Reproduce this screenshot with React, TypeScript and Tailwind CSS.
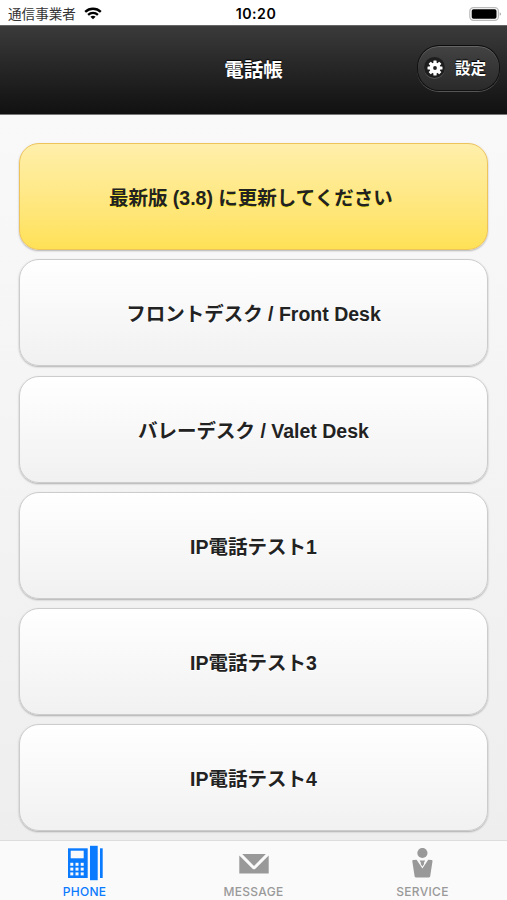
import * as React from 'react';
import { clsx } from 'clsx';

const contacts = [
  { label: '最新版 (3.8) に更新してください\u00a0', highlight: true },
  { label: 'フロントデスク / Front Desk' },
  { label: 'バレーデスク / Valet Desk' },
  { label: 'IP電話テスト1' },
  { label: 'IP電話テスト3' },
  { label: 'IP電話テスト4' },
];

function WifiIcon() {
  return (
    <svg width="18" height="13" viewBox="0 0 18 13" fill="none" stroke="#000" strokeWidth="2.3">
      <path d="M1.2 4.9C5.6 0.7 12.4 0.7 16.8 4.9" />
      <path d="M4.1 7.9C6.9 5.3 11.1 5.3 13.9 7.9" />
      <path d="M9 12.2L6.4 9.8Q9 7.6 11.6 9.8Z" fill="#000" stroke="none" />
    </svg>
  );
}

function BatteryIcon() {
  return (
    <svg width="33" height="14" viewBox="0 0 33 14">
      <rect x="0.8" y="0.7" width="28.6" height="12.6" rx="3.6" fill="#fff" stroke="#bbb" strokeWidth="1.2" />
      <rect x="2.7" y="2.3" width="24.8" height="9.4" rx="1.8" fill="#000" />
      <path d="M30.7 5.2Q32 5.7 32 7T30.7 8.8Z" fill="#aaa" />
    </svg>
  );
}

function GearIcon() {
  return (
    <svg width="16" height="16" viewBox="-8 -8 16 16" className="shrink-0">
      <g fill="#fff">
        <circle r="5.5" />
        {[0, 45, 90, 135].map((angle) => (
          <rect key={angle} x="-1.6" y="-7.5" width="3.2" height="15" rx="0.5" transform={`rotate(${angle})`} />
        ))}
      </g>
      <circle r="1.9" fill="#222" />
    </svg>
  );
}

function PhoneIcon() {
  return (
    <svg width="36" height="36" viewBox="0 0 36 36" fill="#0a7aff">
      <path d="M1 3.3H20.7V33H1Z" />
      <path d="M23 0.8H30.7V35.2H23Z" />
      <path d="M33 3.3H35.7V33H33Z" />
      <path d="M3.7 5.7H16.7V13.3H3.7Z" fill="#fafafa" />
      {[17.8, 22.6, 27.4].map((y) =>
        [3.3, 8.5, 13.7].map((x) => <rect key={`${x}-${y}`} x={x} y={y} width="3" height="3" fill="#fafafa" />)
      )}
    </svg>
  );
}

function MessageIcon() {
  return (
    <svg width="30" height="22" viewBox="0 -2 30 22" fill="#999">
      <path d="M3.2 0H26.8L15 12Z" />
      <path d="M0.3 1.6L13.6 14.7Q15 15.8 16.4 14.7L29.7 1.6V19.4H0.3Z" />
    </svg>
  );
}

function ServiceIcon() {
  return (
    <svg width="22" height="30" viewBox="0 0 22 30" fill="#999">
      <circle cx="10.4" cy="5" r="5.1" />
      <path d="M0.3 13.2Q0.2 12.2 1.2 12.1L4.6 11.7L10.4 20.6L16.2 11.7L19.6 12.1Q20.6 12.2 20.5 13.2L18.2 28.3Q18 29.4 17 29.4H3.8Q2.8 29.4 2.6 28.3Z" />
      <path d="M7.6 12.4H13.2L11.8 14.9L12.1 16L10.4 18.4L8.7 16L9 14.9Z" />
    </svg>
  );
}

const tabs = [
  { label: 'PHONE', icon: <PhoneIcon />, active: true },
  { label: 'MESSAGE', icon: <MessageIcon /> },
  { label: 'SERVICE', icon: <ServiceIcon /> },
];

export default function App() {
  return (
    <div className="flex h-[900px] w-[507px] flex-col overflow-hidden bg-white font-['Liberation_Sans','Noto_Sans_CJK_JP',sans-serif]">
      {/* Status bar */}
      <div className="grid h-[25px] shrink-0 grid-cols-3 items-center pt-0.5 pr-[5px] pl-2 text-black">
        <div className="flex items-center gap-2">
          <span className="pt-0.5 text-[13.6px] leading-5 whitespace-nowrap text-[#333]">通信事業者</span>
          <WifiIcon />
        </div>
        <span className="pl-0.5 text-center font-['Inter',sans-serif] text-[14.2px] leading-5 font-semibold tracking-[0.5px]">10:20</span>
        <div className="flex justify-end">
          <BatteryIcon />
        </div>
      </div>

      {/* Title bar */}
      <header className="grid h-[90px] shrink-0 grid-cols-[1fr_auto_1fr] items-center border-t border-b border-t-[#666] border-b-[#777] bg-linear-to-b from-[#3b3b3b] to-[#111] pr-[7px] pl-[7px] text-white">
        <span />
        <h1 className="text-[19.5px] leading-6 font-bold [text-shadow:0_-1px_1px_#000]">電話帳</h1>
        <button className="mb-[5px] flex h-[46px] w-[83px] items-center gap-[10px] justify-self-end rounded-[22px] border border-[#111] border-t-[#0c0c0c] bg-linear-to-b from-[#434343] to-[#2a2a2a] pl-[6px] shadow-[0_1px_0_#555,inset_0_1px_0_#666]">
          <span className="flex size-[21px] items-center justify-center rounded-full bg-[#1e1e1e] shadow-[0_1px_0_#555]">
            <GearIcon />
          </span>
          <span className="pt-[3px] text-[15.6px] leading-5 font-bold [text-shadow:0_-1px_1px_#000]">設定</span>
        </button>
      </header>

      {/* Contact list */}
      <main className="flex min-h-0 flex-1 flex-col gap-[9.3px] overflow-hidden bg-linear-to-b from-[#f9f9f9] to-[#eee] px-[19px] pt-[28px]">
        {contacts.map((contact) => (
          <button
            key={contact.label}
            className={clsx(
              'flex h-[107px] shrink-0 items-center justify-center rounded-[20px] border pt-[3px] text-[19.5px] leading-6 font-bold text-[#222] shadow-[0_1px_2px_rgba(0,0,0,0.28)]',
              contact.highlight
                ? 'border-[#edc35c] bg-linear-to-b from-[#ffefaa] to-[#ffe155] [text-shadow:0_1px_0_#fe3]'
                : 'border-[#ccc] bg-linear-to-b from-white to-[#f1f1f1] [text-shadow:0_1px_0_#fff]'
            )}
          >
            {contact.label}
          </button>
        ))}
      </main>

      {/* Tab bar */}
      <nav className="grid h-[60px] shrink-0 grid-cols-3 border-t border-[#ddd] bg-[#fafafa]">
        {tabs.map((tab) => (
          <div key={tab.label} className={clsx('flex flex-col items-center', tab.active ? 'text-[#0a7aff]' : 'text-[#999]')}>
            <div className="flex h-[44px] items-center">{tab.icon}</div>
            <span className="font-['Inter',sans-serif] text-[12px] leading-[13px] font-medium tracking-[0.3px]">{tab.label}</span>
          </div>
        ))}
      </nav>
    </div>
  );
}
